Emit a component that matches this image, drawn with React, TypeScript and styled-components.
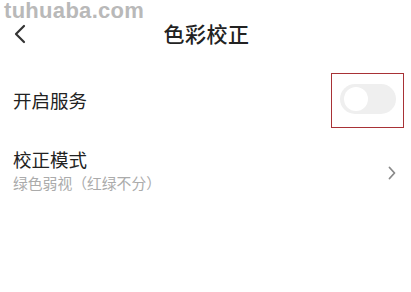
import styled, { createGlobalStyle } from 'styled-components';

const GlobalStyle = createGlobalStyle`
	html, body {
		margin: 0;
		padding: 0;
		background: #ffffff;
	}
	body {
		font-family: 'Noto Sans CJK SC', 'Noto Sans', sans-serif;
	}
`;

const App = () => {
	return (
		<SPage>
			<GlobalStyle />
			<Watermark>tuhuaba.com</Watermark>
			<Header>
				<BackButton aria-label='返回'>
					<svg width='14' height='20' viewBox='0 0 14 20'>
						<path d='M11 2 L3 10 L11 18' fill='none' stroke='#333' strokeWidth='2.2' strokeLinecap='round' strokeLinejoin='round' />
					</svg>
				</BackButton>
				<Title>色彩校正</Title>
			</Header>
			<List>
				<Row $height={58}>
					<RowText>
						<RowTitle>开启服务</RowTitle>
					</RowText>
					<Highlight>
						<Switch>
							<Knob />
						</Switch>
					</Highlight>
				</Row>
				<Row $height={80}>
					<RowText>
						<RowTitle>校正模式</RowTitle>
						<RowSub>绿色弱视（红绿不分）</RowSub>
					</RowText>
					<Arrow>
						<svg width='10' height='16' viewBox='0 0 10 16'>
							<path d='M2.5 2.5 L7.5 8 L2.5 13.5' fill='none' stroke='#8a8a8a' strokeWidth='1.8' strokeLinecap='round' strokeLinejoin='round' />
						</svg>
					</Arrow>
				</Row>
			</List>
		</SPage>
	);
};

export default App;

const SPage = styled.div`
	position: relative;
	width: 411px;
	height: 292px;
	overflow: hidden;
	background: #ffffff;
`;

const Watermark = styled.div`
	position: absolute;
	left: 4px;
	top: 0;
	font-family: 'Liberation Sans', Arial, sans-serif;
	font-weight: 700;
	font-size: 22px;
	line-height: 22px;
	letter-spacing: 0.3px;
	color: #b9b9b9;
	pointer-events: none;
`;

const Header = styled.div`
	height: 36px;
	margin-top: 16px;
	display: flex;
	align-items: center;
	justify-content: center;
	position: relative;
`;

const BackButton = styled.div`
	position: absolute;
	left: 13px;
	top: 6px;
	width: 16px;
	height: 24px;
	display: flex;
	align-items: center;
`;

const Title = styled.div`
	font-size: 21px;
	font-weight: 500;
	color: #222222;
	letter-spacing: 0.5px;
	margin-left: 2px;
	margin-top: -2px;
`;

const List = styled.div`
	margin-top: 19px;
	display: flex;
	flex-direction: column;
`;

const Row = styled.div<{ $height: number }>`
	height: ${(p) => p.$height}px;
	display: flex;
	align-items: center;
	justify-content: space-between;
	padding: 0 14px 0 13px;
`;

const RowText = styled.div`
	display: flex;
	flex-direction: column;
`;

const RowTitle = styled.div`
	font-size: 18.5px;
	line-height: 24px;
	color: #222222;
`;

const RowSub = styled.div`
	font-size: 14.8px;
	line-height: 18px;
	margin-top: 3px;
	color: #ababab;
`;

const Highlight = styled.div`
	width: 71px;
	height: 53px;
	border: 1px solid #a83236;
	margin-right: -7px;
	display: flex;
	align-items: center;
	justify-content: center;
	box-sizing: content-box;
`;

const Switch = styled.div`
	width: 56px;
	height: 30px;
	border-radius: 15px;
	background: #efefef;
	display: flex;
	align-items: center;
	padding: 0 4px;
	box-sizing: border-box;
	margin-top: -2px;
`;

const Knob = styled.div`
	width: 24px;
	height: 24px;
	border-radius: 50%;
	background: #ffffff;
`;

const Arrow = styled.div`
	display: flex;
	align-items: center;
	margin-top: 8px;
`;
